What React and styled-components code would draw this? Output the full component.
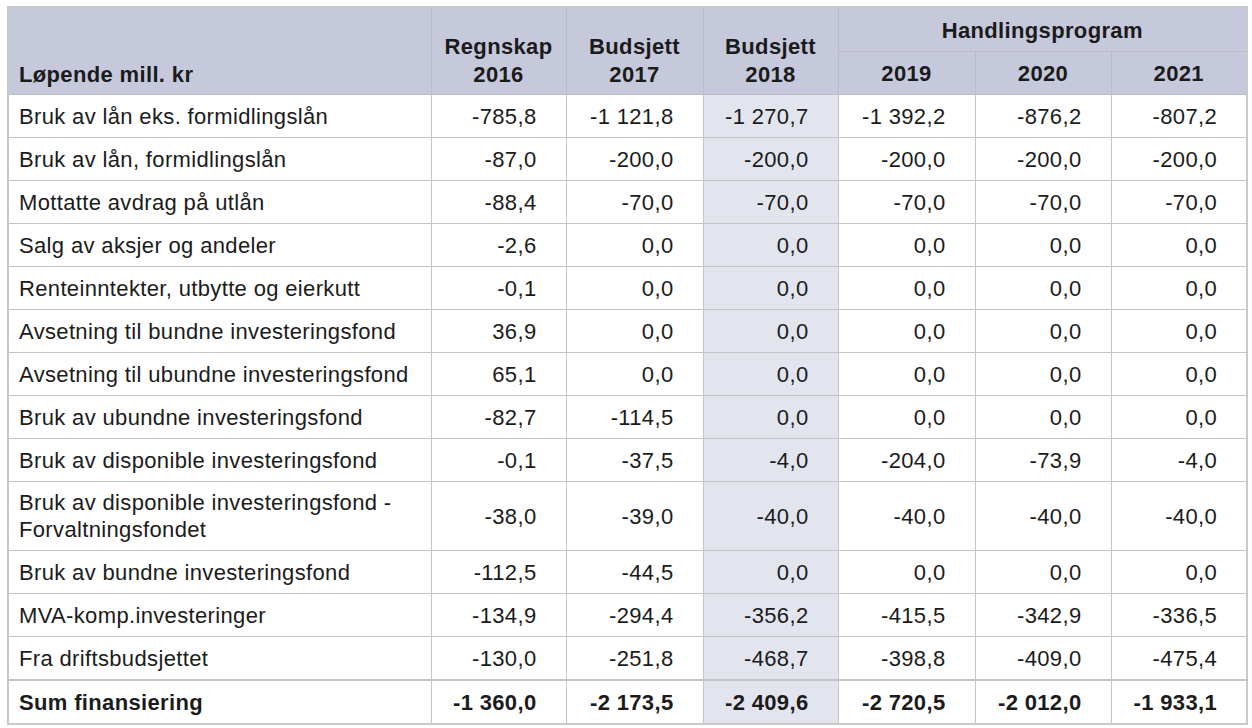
import React from "react";
import styled, { createGlobalStyle } from "styled-components";

const Global = createGlobalStyle`
  html, body { margin: 0; padding: 0; background: #ffffff; }
  body { font-family: "Liberation Sans", Arial, sans-serif; color: #1b1b1b; }
`;

const Page = styled.div`
  padding: 6px 0 0 7px;
`;

const Table = styled.table`
  border-collapse: collapse;
  width: 1239px;
  table-layout: fixed;
  font-size: 22px;
  letter-spacing: 0.35px;
  border: 2px solid #c9c9c9;
`;

const HeadCell = styled.th`
  background: #c6c9db;
  border: 1px solid #bcbcc4;
  font-weight: 700;
  line-height: 28px;
  padding: ${(p) => (p.$bottom ? "0 10px 5px" : "2px 10px 0")};
  text-align: ${(p) => (p.$left ? "left" : "center")};
  vertical-align: ${(p) => (p.$bottom ? "bottom" : "middle")};
  height: ${(p) => p.$h || 40}px;
`;

const Row = styled.tr``;

const Label = styled.td`
  border: 1px solid #c4c4c4;
  padding: 7px 10px;
  line-height: 27px;
  height: ${(p) => (p.$tall ? 54 : 28)}px;
  font-weight: ${(p) => (p.$sum ? 700 : 400)};
  ${(p) => p.$sum && "border-top: 2px solid #c4c4c4; border-bottom: 2px solid #c9c9c9;"}
`;

const Num = styled.td`
  border: 1px solid #c4c4c4;
  padding: 7px 29px 7px 8px;
  line-height: 27px;
  text-align: right;
  white-space: nowrap;
  background: ${(p) => (p.$hl ? "#e3e5ee" : "#ffffff")};
  font-weight: ${(p) => (p.$sum ? 700 : 400)};
  ${(p) => p.$sum && "border-top: 2px solid #c4c4c4; border-bottom: 2px solid #c9c9c9;"}
`;

const rows = [
  ["Bruk av lån eks. formidlingslån", ["-785,8", "-1 121,8", "-1 270,7", "-1 392,2", "-876,2", "-807,2"]],
  ["Bruk av lån, formidlingslån", ["-87,0", "-200,0", "-200,0", "-200,0", "-200,0", "-200,0"]],
  ["Mottatte avdrag på utlån", ["-88,4", "-70,0", "-70,0", "-70,0", "-70,0", "-70,0"]],
  ["Salg av aksjer og andeler", ["-2,6", "0,0", "0,0", "0,0", "0,0", "0,0"]],
  ["Renteinntekter, utbytte og eierkutt", ["-0,1", "0,0", "0,0", "0,0", "0,0", "0,0"]],
  ["Avsetning til bundne investeringsfond", ["36,9", "0,0", "0,0", "0,0", "0,0", "0,0"]],
  ["Avsetning til ubundne investeringsfond", ["65,1", "0,0", "0,0", "0,0", "0,0", "0,0"]],
  ["Bruk av ubundne investeringsfond", ["-82,7", "-114,5", "0,0", "0,0", "0,0", "0,0"]],
  ["Bruk av disponible investeringsfond", ["-0,1", "-37,5", "-4,0", "-204,0", "-73,9", "-4,0"]],
  ["Bruk av disponible investeringsfond -\nForvaltningsfondet", ["-38,0", "-39,0", "-40,0", "-40,0", "-40,0", "-40,0"], true],
  ["Bruk av bundne investeringsfond", ["-112,5", "-44,5", "0,0", "0,0", "0,0", "0,0"]],
  ["MVA-komp.investeringer", ["-134,9", "-294,4", "-356,2", "-415,5", "-342,9", "-336,5"]],
  ["Fra driftsbudsjettet", ["-130,0", "-251,8", "-468,7", "-398,8", "-409,0", "-475,4"]],
];

const sum = ["-1 360,0", "-2 173,5", "-2 409,6", "-2 720,5", "-2 012,0", "-1 933,1"];

export default function App() {
  return (
    <>
      <Global />
      <Page>
        <Table>
          <colgroup>
            <col style={{ width: 423 }} />
            <col style={{ width: 135 }} />
            <col style={{ width: 137 }} />
            <col style={{ width: 135 }} />
            <col style={{ width: 137 }} />
            <col style={{ width: 136 }} />
            <col style={{ width: 136 }} />
          </colgroup>
          <thead>
            <tr>
              <HeadCell rowSpan={2} $left $bottom>Løpende mill. kr</HeadCell>
              <HeadCell rowSpan={2} $bottom>Regnskap<br />2016</HeadCell>
              <HeadCell rowSpan={2} $bottom>Budsjett<br />2017</HeadCell>
              <HeadCell rowSpan={2} $bottom>Budsjett<br />2018</HeadCell>
              <HeadCell colSpan={3} $h={41}>Handlingsprogram</HeadCell>
            </tr>
            <tr>
              <HeadCell>2019</HeadCell>
              <HeadCell>2020</HeadCell>
              <HeadCell>2021</HeadCell>
            </tr>
          </thead>
          <tbody>
            {rows.map(([label, vals, tall]) => (
              <Row key={label}>
                <Label $tall={tall}>
                  {label.split("\n").map((l, i) => (
                    <React.Fragment key={i}>
                      {i > 0 && <br />}
                      {l}
                    </React.Fragment>
                  ))}
                </Label>
                {vals.map((v, i) => (
                  <Num key={i} $hl={i === 2}>{v}</Num>
                ))}
              </Row>
            ))}
            <Row>
              <Label $sum>Sum finansiering</Label>
              {sum.map((v, i) => (
                <Num key={i} $hl={i === 2} $sum>{v}</Num>
              ))}
            </Row>
          </tbody>
        </Table>
      </Page>
    </>
  );
}
